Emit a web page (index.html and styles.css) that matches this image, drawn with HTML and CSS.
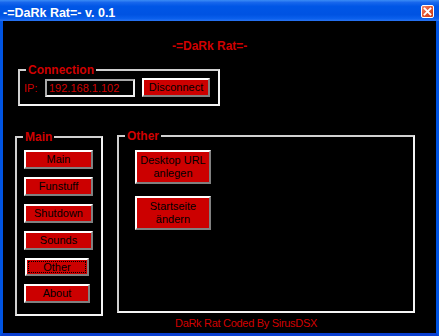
FILE: index.html
```html
<!DOCTYPE html>
<html lang="de">
<head>
    <meta charset="UTF-8">
    <meta name="viewport" content="width=device-width, initial-scale=1.0">
    <title>-=DaRk Rat=- v. 0.1</title>
    <link rel="stylesheet" href="styles.css">
</head>
<body>
    <div class="window">
        <div class="titlebar">
            <span class="title">-=DaRk Rat=- v. 0.1</span>
            <button class="close" type="button" aria-label="Close">
                <svg width="9" height="9" viewBox="0 0 9 9">
                    <path d="M1.5 1.5 L7.5 7.5 M7.5 1.5 L1.5 7.5" stroke="#fff" stroke-width="1.8" stroke-linecap="square"/>
                </svg>
            </button>
        </div>

        <div class="client">
            <div class="heading">-=DaRk Rat=-</div>

            <div class="group connection">
                <span class="group-title">Connection</span>
                <div class="conn-row">
                    <label for="ip" class="ip-label">IP:</label>
                    <input type="text" id="ip" class="ip-input" value="192.168.1.102">
                    <button type="button" class="btn btn-disconnect">Disconnect</button>
                </div>
            </div>

            <div class="groups">
                <div class="group main-group">
                    <span class="group-title">Main</span>
                    <div class="btn-list">
                        <button type="button" class="btn btn-menu">Main</button>
                        <button type="button" class="btn btn-menu">Funstuff</button>
                        <button type="button" class="btn btn-menu">Shutdown</button>
                        <button type="button" class="btn btn-menu">Sounds</button>
                        <button type="button" class="btn btn-menu btn-other focused">Other</button>
                        <button type="button" class="btn btn-menu btn-about">About</button>
                    </div>
                </div>

                <div class="group other-group">
                    <span class="group-title">Other</span>
                    <div class="btn-list wide">
                        <button type="button" class="btn btn-big">Desktop URL<br>anlegen</button>
                        <button type="button" class="btn btn-big">Startseite<br>ändern</button>
                    </div>
                </div>
            </div>

            <div class="footer">DaRk Rat Coded By SirusDSX</div>
        </div>
    </div>
</body>
</html>
```

FILE: styles.css
```css
body {
    margin: 0;
    background: #000;
    font-family: "Liberation Sans", Arial, sans-serif;
}
.window {
    width: 439px;
    height: 336px;
    display: flex;
    flex-direction: column;
}
.titlebar {
    height: 21px;
    display: flex;
    justify-content: space-between;
    align-items: flex-start;
    padding: 0 5px 0 3px;
    box-sizing: border-box;
    background: linear-gradient(to bottom, #3b8cf5 0%, #1766ec 12%, #0056e6 30%, #0053e2 70%, #0a5fec 88%, #2a74f2 100%);
}
.title {
    color: #fff;
    font-weight: bold;
    font-size: 12.5px;
    line-height: 14px;
    padding-top: 6px;
}
.close {
    width: 13px;
    height: 13px;
    margin-top: 5px;
    padding: 0;
    border: 1px solid #fff;
    border-radius: 2px;
    background: linear-gradient(to bottom right, #f0866a, #e2532f 50%, #c43a1a);
    display: flex;
    align-items: center;
    justify-content: center;
}
.client {
    flex: 1;
    background: #000;
    border: 3px solid #0054e3;
    border-top: none;
    border-bottom-color: #0a3fd0;
}
.heading {
    padding: 18px 0 0 169px;
    color: #d00000;
    font-weight: bold;
    font-size: 12px;
    line-height: 14px;
}
.group {
    position: relative;
    border: 2px solid;
    border-color: #d0d0d0 #f4f4f4 #f4f4f4 #d0d0d0;
    box-sizing: border-box;
}
.group-title {
    position: absolute;
    top: -8px;
    left: 6px;
    padding: 0 2px;
    background: #000;
    color: #d00000;
    font-weight: bold;
    font-size: 12px;
    line-height: 14px;
}
.connection {
    width: 202px;
    height: 37px;
    margin: 16px 0 0 15px;
}
.conn-row {
    display: flex;
    align-items: center;
    padding: 7px 0 0 4px;
}
.ip-label {
    color: #d00000;
    font-size: 11px;
    width: 21px;
}
.ip-input {
    width: 90px;
    height: 18px;
    box-sizing: border-box;
    margin: 0;
    padding: 0 0 0 2px;
    border: 2px solid;
    border-color: #a8a8a8 #f0f0f0 #f0f0f0 #a8a8a8;
    background: #000;
    color: #d00000;
    font-family: "Liberation Sans", Arial, sans-serif;
    font-size: 11px;
}
.btn {
    margin: 0;
    padding: 0;
    box-sizing: border-box;
    background: #cc0000;
    color: #000;
    border: 2px solid;
    border-color: #fff #808080 #808080 #fff;
    font-family: "Liberation Sans", Arial, sans-serif;
    font-size: 11px;
    line-height: 13px;
}
.btn-disconnect {
    width: 68px;
    height: 19px;
    margin-left: 7px;
}
.groups {
    display: flex;
    align-items: flex-start;
    margin: 29px 0 0 12px;
    gap: 14px;
}
.main-group {
    width: 88px;
    height: 180px;
    margin-top: 1px;
}
.other-group {
    width: 298px;
    height: 178px;
}
.btn-list {
    display: flex;
    flex-direction: column;
    align-items: flex-start;
    gap: 8px;
    padding: 12px 0 0 7px;
}
.btn-menu {
    width: 69px;
    height: 19px;
}
.btn-other {
    width: 64px;
    height: 18px;
    margin-left: 1px;
}
.focused {
    outline: 1px dotted #000;
    outline-offset: -4px;
}
.btn-about {
    width: 66px;
}
.btn-list.wide {
    gap: 12px;
    padding: 13px 0 0 16px;
}
.btn-big {
    width: 76px;
    height: 34px;
}
.footer {
    margin-top: 1px;
    padding-left: 172px;
    color: #d00000;
    font-size: 11px;
    line-height: 13px;
    letter-spacing: -0.3px;
}
```
